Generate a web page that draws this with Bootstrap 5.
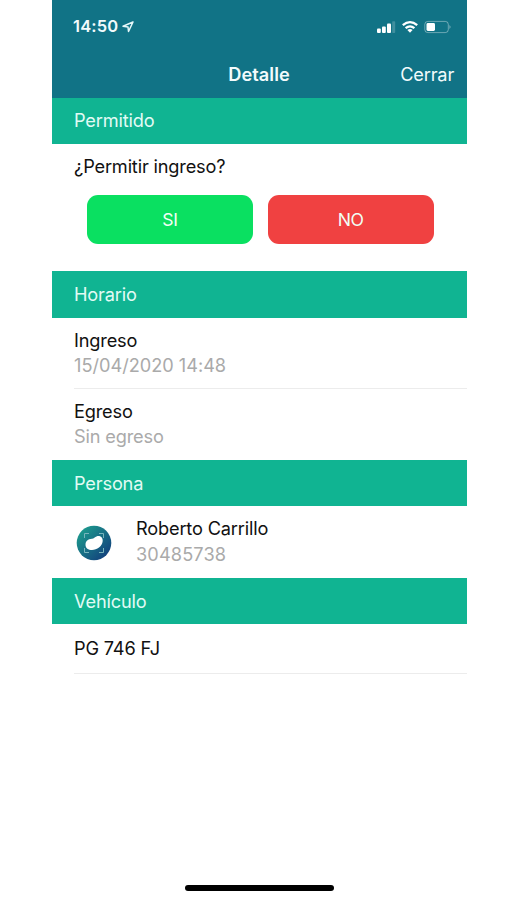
<!DOCTYPE html>
<html lang="es">
<head>
<meta charset="utf-8">
<meta name="viewport" content="width=device-width, initial-scale=1">
<title>Detalle</title>
<link href="https://cdn.jsdelivr.net/npm/bootstrap@5.3.0/dist/css/bootstrap.min.css" rel="stylesheet">
<style>
body{font-family:Inter,"Liberation Sans",sans-serif;font-size:18.2px;line-height:25.5px;letter-spacing:-.17px;color:#111;background:#fff}
.phone{width:414.6px;height:900px;margin-left:52px}
.top-area{height:98px;background:#117386;color:#f2fbfc}
.status-bar{height:50px;padding:3px 15px 0 21px}
.clock{font-size:16.5px;font-weight:600;letter-spacing:.15px}
.title-bar{height:49px;display:grid;grid-template-columns:1fr auto 1fr;padding:1px 12.5px 0 12px}
.title-text{letter-spacing:.05px}
h2.section-band{height:46.5px;padding-left:22px;background:#10b492;color:#e2fbf5;font-size:18.2px;font-weight:400;line-height:25.5px}
h2.band-first{height:45.5px}
h2.band-low{padding-top:1px}
.ask{height:127.5px;padding-top:10px}
.ask p{padding-left:22px}
.choices{padding:0 33px 0 35px;gap:15px;margin-top:15.5px}
.choice{height:49px;border-radius:11px;border:0;padding-top:8px;color:#f1fff5;font-size:17.6px;letter-spacing:-.3px}
.yes,.yes:hover{background:#0ae061}
.no,.no:hover{background:#f04141}
.entry{height:71.2px;margin-left:22px;padding-top:10px}
.ruled{border-bottom:1px solid #ececec}
.sub{color:#aaa}
.digits{letter-spacing:-.02px}
.id-number{letter-spacing:.12px}
.avatar{width:36px;height:36px;margin:8.5px 24px 0 2px}
.plate{height:49.5px;margin-left:22px;padding-top:1px}
.home{width:149px;height:6px;border-radius:3px;background:#000;margin:0 auto 9px 133px}
</style>
<script src="https://cdn.jsdelivr.net/npm/bootstrap@5.3.0/dist/js/bootstrap.bundle.min.js"></script>
</head>
<body>
<main class="phone d-flex flex-column">
<header class="top-area">
<div class="status-bar d-flex align-items-center justify-content-between">
<div class="d-flex align-items-center"><span class="clock">14:50</span>
<svg class="ms-1" width="12" height="12" viewBox="0 0 12 12" fill="none" stroke="#e6f7f9" stroke-width="1.5" stroke-linejoin="round"><path d="M11 1 1 5.200l5 .8.5 4.500z"/></svg></div>
<svg width="75" height="14" viewBox="0 0 75 14">
<g fill="#fff"><rect x="0" y="8.500" width="3.800" height="4.500" rx="1"/><rect x="5" y="6.500" width="3.800" height="6.500" rx="1"/><rect x="10" y="3.500" width="4" height="9.500" rx="1"/><rect x="15.200" y="1.200" width="3" height="11.800" rx=".8" opacity=".2"/></g>
<g fill="none" stroke="#fff" stroke-width="2.300"><path d="M25.800 5.200q7.200-6.200 14.400 0M28.600 8.200q4.400-3.600 8.800 0"/></g><path d="M30.400 10.100q2.600-2 5.200 0L33 12.800z" fill="#fff"/>
<rect x="47.800" y="1.400" width="23.500" height="11.200" rx="3" fill="none" stroke="#fff" stroke-opacity=".38"/><rect x="49.500" y="3" width="8.500" height="8" rx="1.400" fill="#fff"/><path d="M72.500 5q2 2 0 4z" fill="#fff" opacity=".5"/>
</svg>
</div>
<div class="title-bar align-items-center"><span></span><span class="title-text fw-semibold">Detalle</span><span class="text-end">Cerrar</span></div>
</header>
<h2 class="section-band band-first d-flex align-items-center m-0">Permitido</h2>
<section class="ask"><p class="mb-0">¿Permitir ingreso?</p>
<div class="choices d-flex"><button class="choice yes btn flex-fill w-50">SI</button><button class="choice no btn flex-fill w-50">NO</button></div></section>
<h2 class="section-band d-flex align-items-center m-0">Horario</h2>
<div class="entry ruled"><div>Ingreso</div><div class="sub digits">15/04/2020 14:48</div></div>
<div class="entry"><div>Egreso</div><div class="sub">Sin egreso</div></div>
<h2 class="section-band band-low d-flex align-items-center m-0">Persona</h2>
<div class="entry d-flex">
<svg class="avatar" viewBox="0 0 36 36"><defs><linearGradient id="g" x1="0" y1="0" x2="1" y2="1"><stop offset=".1" stop-color="#1d9c8e"/><stop offset=".9" stop-color="#123f7c"/></linearGradient></defs><circle cx="18" cy="18" r="17.300" fill="url(#g)"/><path d="M8.500 13V8.500H13M23 8.500h4.500V13M27.500 23v4.500H23M13 27.500H8.500V23" fill="none" stroke="#78b5bd" stroke-width="1"/><path d="M9.500 20c0-4 2.500-6 6.500-6.200 2 0 2.500-2 5-2.600 3.300-.6 6 1.500 5.700 4.800-.5 5.300-5.700 9-10.700 9-3.700 0-6.500-2-6.500-5z" fill="#fff"/></svg>
<div><div>Roberto Carrillo</div><div class="sub id-number">30485738</div></div></div>
<h2 class="section-band band-low d-flex align-items-center m-0">Vehículo</h2>
<div class="plate ruled d-flex align-items-center">PG 746 FJ</div>
<div class="home mt-auto"></div>
</main>
</body>
</html>
